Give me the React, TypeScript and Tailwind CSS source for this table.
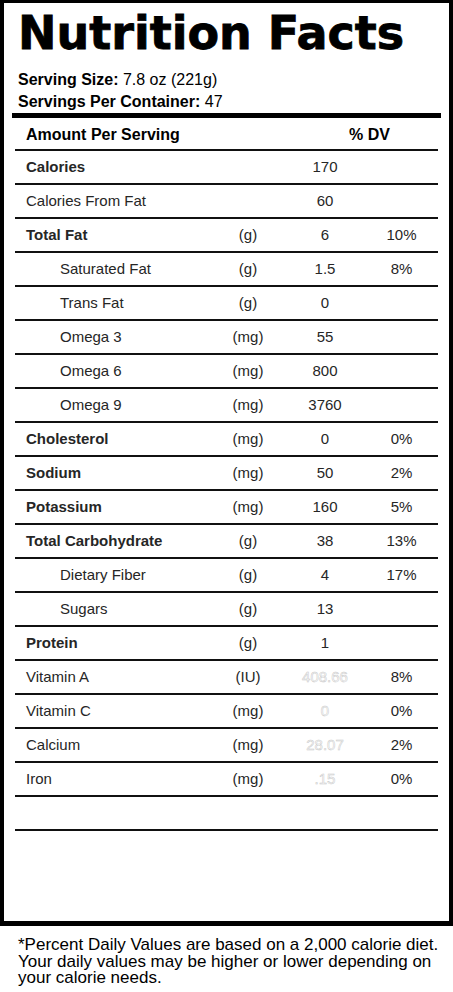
const ROWS: { label: string; unit?: string; value: string; dv?: string; bold?: boolean; indent?: boolean; faint?: boolean }[] = [
  { label: 'Calories', value: '170', bold: true },
  { label: 'Calories From Fat', value: '60' },
  { label: 'Total Fat', unit: '(g)', value: '6', dv: '10%', bold: true },
  { label: 'Saturated Fat', unit: '(g)', value: '1.5', dv: '8%', indent: true },
  { label: 'Trans Fat', unit: '(g)', value: '0', indent: true },
  { label: 'Omega 3', unit: '(mg)', value: '55', indent: true },
  { label: 'Omega 6', unit: '(mg)', value: '800', indent: true },
  { label: 'Omega 9', unit: '(mg)', value: '3760', indent: true },
  { label: 'Cholesterol', unit: '(mg)', value: '0', dv: '0%', bold: true },
  { label: 'Sodium', unit: '(mg)', value: '50', dv: '2%', bold: true },
  { label: 'Potassium', unit: '(mg)', value: '160', dv: '5%', bold: true },
  { label: 'Total Carbohydrate', unit: '(g)', value: '38', dv: '13%', bold: true },
  { label: 'Dietary Fiber', unit: '(g)', value: '4', dv: '17%', indent: true },
  { label: 'Sugars', unit: '(g)', value: '13', indent: true },
  { label: 'Protein', unit: '(g)', value: '1', bold: true },
  { label: 'Vitamin A', unit: '(IU)', value: '408.66', dv: '8%', faint: true },
  { label: 'Vitamin C', unit: '(mg)', value: '0', dv: '0%', faint: true },
  { label: 'Calcium', unit: '(mg)', value: '28.07', dv: '2%', faint: true },
  { label: 'Iron', unit: '(mg)', value: '.15', dv: '0%', faint: true },
];

export default function App() {
  return (
    <div className="w-[453px] h-[992px] bg-white font-['Liberation_Sans',Arial,sans-serif] text-black">
      {/* Label box */}
      <div className="h-[926px] border-l-4 border-r-4 border-t-[3px] border-b-[5px] border-black px-[8px] flex flex-col">
        <h1 className="font-['DejaVu_Sans',sans-serif] font-bold text-[46px] leading-[52px] pl-[6px] pt-[4px] [-webkit-text-stroke:0.8px_black]">
          Nutrition Facts
        </h1>
        <div className="pl-[6px] text-[16px] leading-[22px] mt-[10px]">
          <span className="font-bold">Serving Size:</span> 7.8 oz (221g)
        </div>
        <div className="pl-[6px] text-[16px] leading-[22px]">
          <span className="font-bold">Servings Per Container:</span> 47
        </div>

        {/* thick rule */}
        <div className="h-[5px] bg-black" />

        <div className="mx-[3px]">
          <div className="h-[33px] pt-[3px] border-b-2 border-[#111] grid grid-cols-[195px_76px_78px_75px] items-center text-[16px] font-bold">
            <div className="pl-[11px]">Amount Per Serving</div>
            <div />
            <div className="col-span-2 pl-[63px]">% DV</div>
          </div>

          {ROWS.map(row => (
            <div
              key={row.label}
              className="h-[34px] border-b-2 border-[#111] grid grid-cols-[195px_76px_78px_75px] items-center text-[15px] text-[#262626]"
            >
              <div className={`${row.indent ? 'pl-[45px]' : 'pl-[11px]'} ${row.bold ? 'font-bold' : ''}`}>{row.label}</div>
              <div className="text-center">{row.unit}</div>
              <div className={`text-center ${row.faint ? 'text-white [-webkit-text-stroke:0.5px_#c8c8c8]' : ''}`}>{row.value}</div>
              <div className="text-center">{row.dv}</div>
            </div>
          ))}
          <div className="h-[34px] border-b-2 border-[#111]" />
        </div>
      </div>

      {/* Footnote */}
      <p className="pl-[18px] pr-[8px] pt-[11px] text-[17px] leading-[16.5px]">
        *Percent Daily Values are based on a 2,000 calorie diet. Your daily values may be higher or lower depending on your calorie needs.
      </p>
    </div>
  );
}
